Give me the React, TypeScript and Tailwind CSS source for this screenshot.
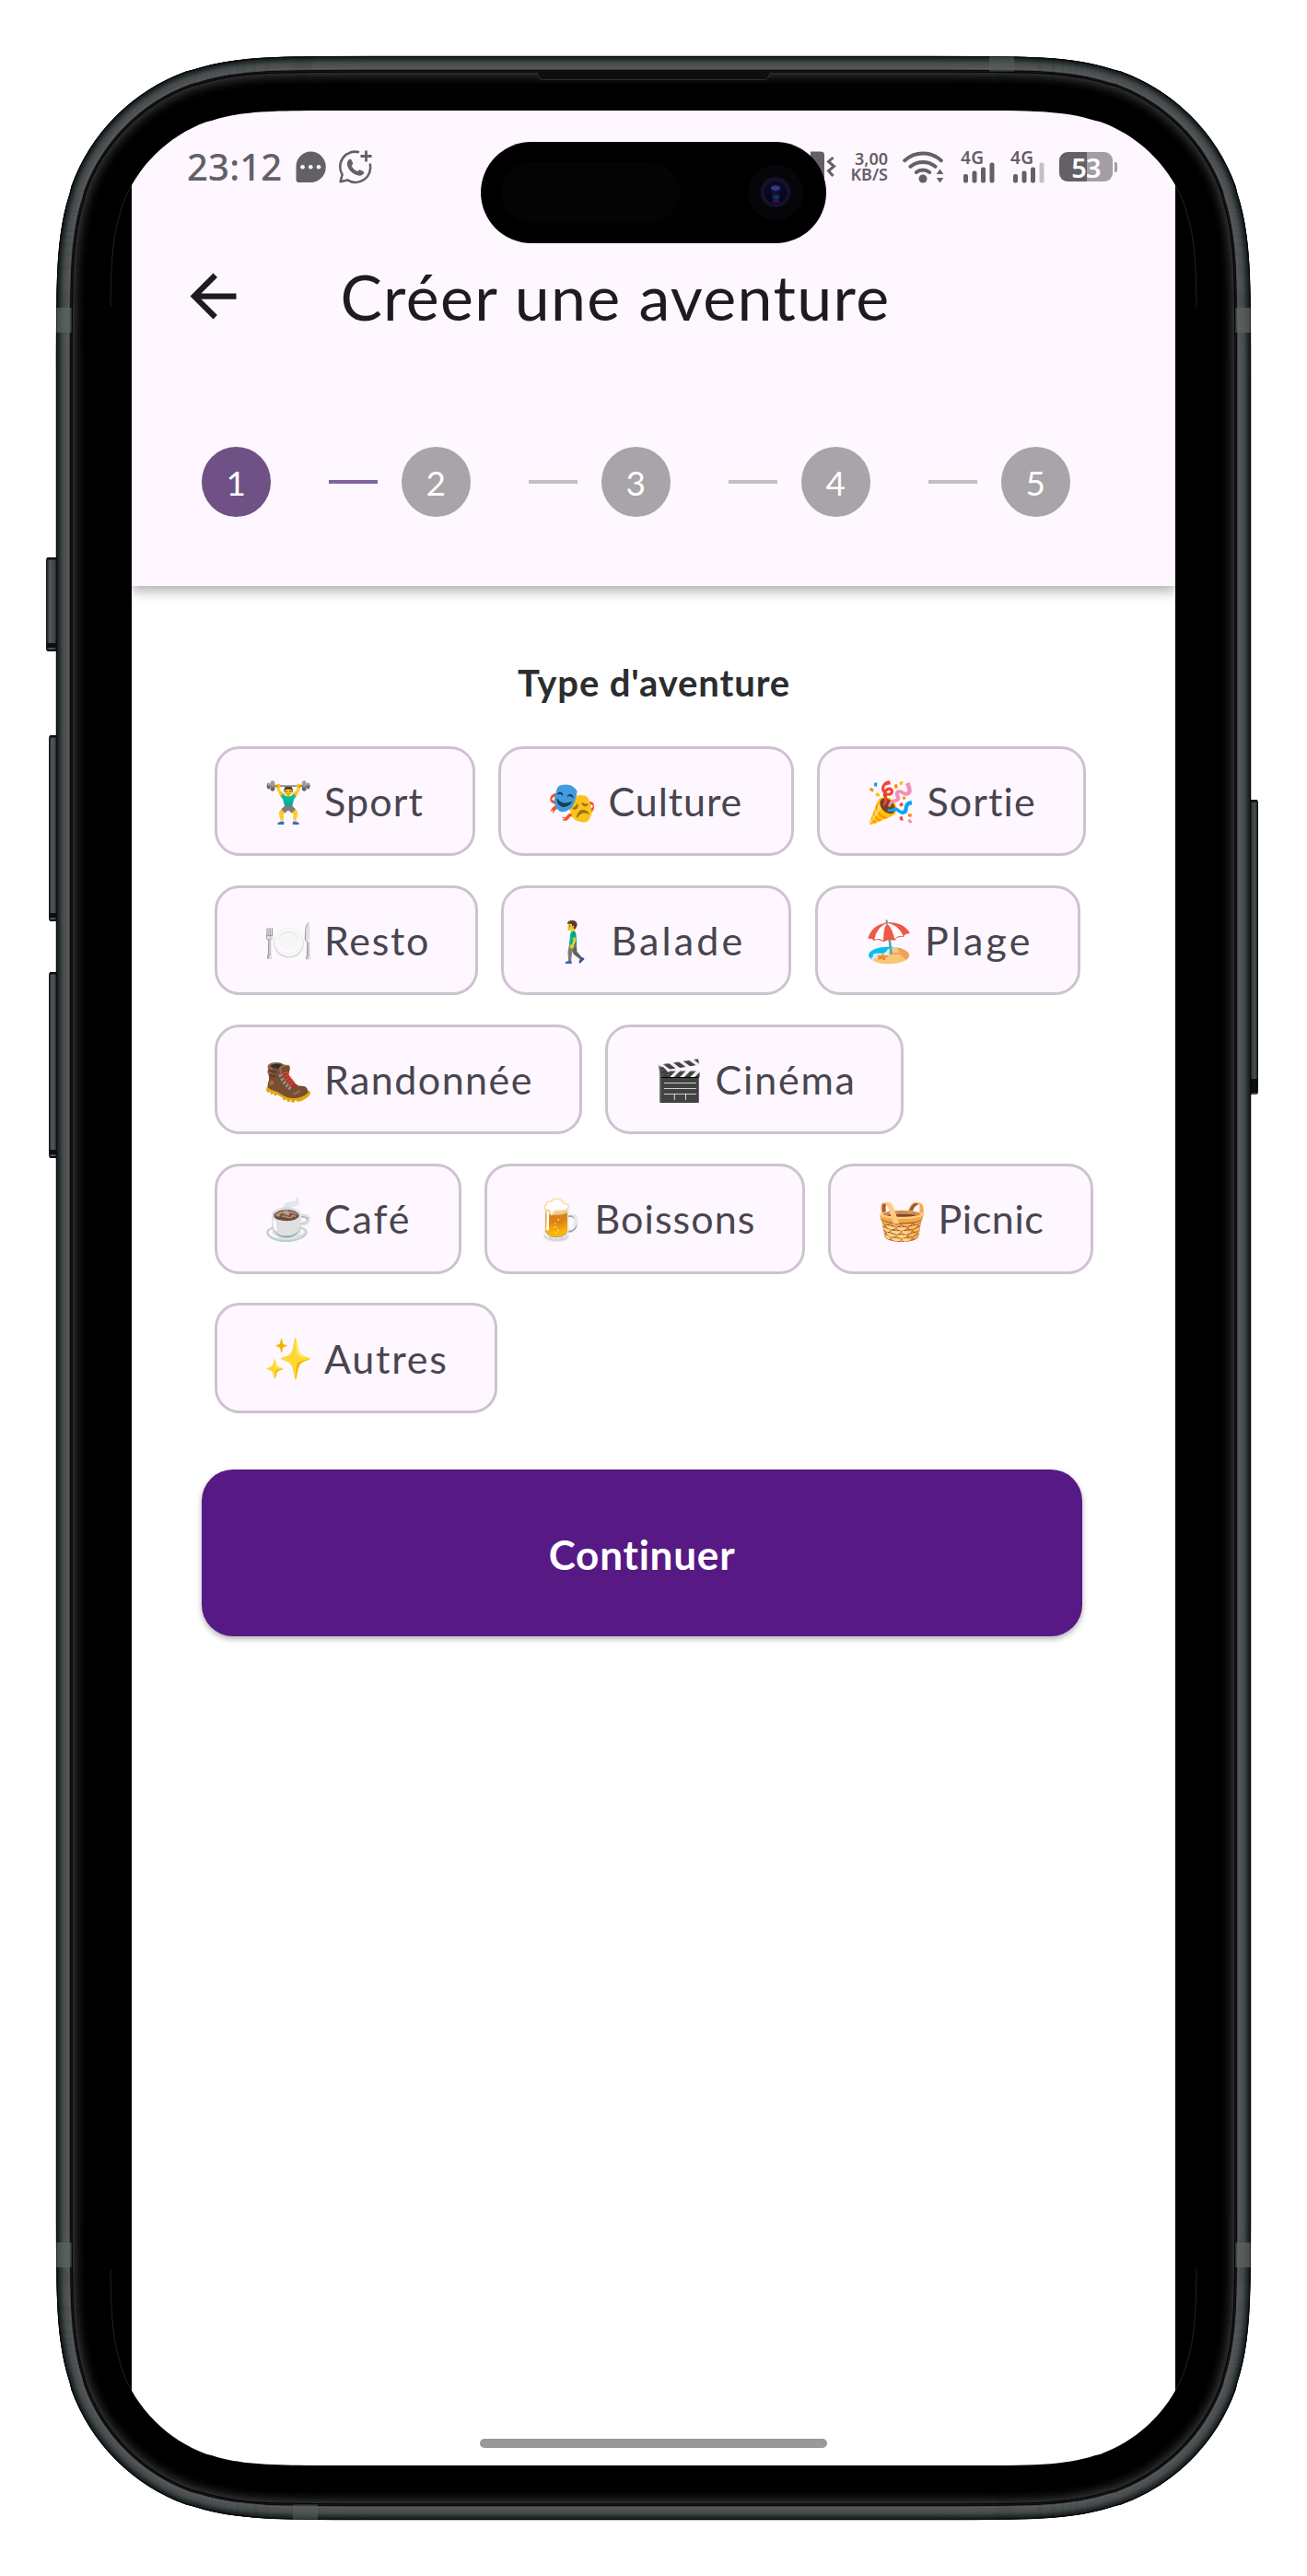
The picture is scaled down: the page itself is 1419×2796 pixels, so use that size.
type Chip = { emoji: string; label: string; box: string };

const CHIP_ROWS: Chip[][] = [
  [
    { emoji: '🏋️‍♂️', label: 'Sport', box: 'w-[283px] tracking-[1.1px]' },
    { emoji: '🎭', label: 'Culture', box: 'w-[320.5px] tracking-[0.9px]' },
    { emoji: '🎉', label: 'Sortie', box: 'w-[291.5px] tracking-[1.1px]' },
  ],
  [
    { emoji: '🍽️', label: 'Resto', box: 'w-[286px] tracking-[1.7px]' },
    { emoji: '🚶‍♂️', label: 'Balade', box: 'w-[315px] tracking-[3.1px]' },
    { emoji: '🏖️', label: 'Plage', box: 'w-[288px] tracking-[3.1px]' },
  ],
  [
    { emoji: '🥾', label: 'Randonnée', box: 'w-[399px] tracking-[1.44px]' },
    { emoji: '🎬', label: 'Cinéma', box: 'w-[324px] tracking-[1.8px]' },
  ],
  [
    { emoji: '☕', label: 'Café', box: 'w-[268px] tracking-[1.9px]' },
    { emoji: '🍺', label: 'Boissons', box: 'w-[347.5px] tracking-[1.07px]' },
    { emoji: '🧺', label: 'Picnic', box: 'w-[287.5px] tracking-[0.6px]' },
  ],
  [{ emoji: '✨', label: 'Autres', box: 'w-[307.5px] tracking-[1.75px]' }],
];

/* Rounded rectangle with continuous-curvature corners. */
function smoothRect(x: number, y: number, w: number, h: number, r: number) {
  const k = [1.52866, 1.08849, 0.86841, 0.66993, 0.63149, 0.37282, 0.16906, 0.07491, 0.06549].map((v) => v * r);
  const [a, b, c, d, e, f, g, i, j] = k;
  const X = x + w;
  const Y = y + h;
  return [
    `M${x + a} ${y}H${X - a}`,
    `C${X - b} ${y} ${X - c} ${y} ${X - d} ${y + j}L${X - e} ${y + i}`,
    `C${X - f} ${y + g} ${X - g} ${y + f} ${X - i} ${y + e}L${X - j} ${y + d}`,
    `C${X} ${y + c} ${X} ${y + b} ${X} ${y + a}V${Y - a}`,
    `C${X} ${Y - b} ${X} ${Y - c} ${X - j} ${Y - d}L${X - i} ${Y - e}`,
    `C${X - g} ${Y - f} ${X - f} ${Y - g} ${X - e} ${Y - i}L${X - d} ${Y - j}`,
    `C${X - c} ${Y} ${X - b} ${Y} ${X - a} ${Y}H${x + a}`,
    `C${x + b} ${Y} ${x + c} ${Y} ${x + d} ${Y - j}L${x + e} ${Y - i}`,
    `C${x + f} ${Y - g} ${x + g} ${Y - f} ${x + i} ${Y - e}L${x + j} ${Y - d}`,
    `C${x} ${Y - c} ${x} ${Y - b} ${x} ${Y - a}V${y + a}`,
    `C${x} ${y + b} ${x} ${y + c} ${x + j} ${y + d}L${x + i} ${y + e}`,
    `C${x + g} ${y + f} ${x + f} ${y + g} ${x + e} ${y + i}L${x + d} ${y + j}`,
    `C${x + c} ${y} ${x + b} ${y} ${x + a} ${y}Z`,
  ].join('');
}

const ring = (inset: number) => smoothRect(61 + inset, 61 + inset, 1297 - 2 * inset, 2674 - 2 * inset, 223 - inset);
const SCREEN = smoothRect(120, 120, 1179, 2556, 165);

/* Colours of the metal edge and bezel glow, one per pixel from outside in. */
const EDGE = [
  '#08090a', '#181d1e', '#1f2526', '#262c2e', '#2d3335', '#353b3d', '#3d4345', '#44494b', '#494d4f', '#4c5052',
  '#4e5254', '#505455', '#515556', '#5a5d5e', '#4c4e4f', '#0b0b0b', '#161616', '#050505', '#2c2c2c', '#272727',
  '#222222', '#1d1d1d', '#191919', '#151515', '#111111', '#0e0e0e', '#0b0b0b', '#080808', '#060606', '#040404',
];

const LEFT_BUTTONS = [
  { x: 50, y: 605, w: 12, h: 102 },
  { x: 53, y: 798, w: 9, h: 202 },
  { x: 53, y: 1055, w: 9, h: 202 },
];

function DeviceFrame() {
  return (
    <svg className="pointer-events-none absolute inset-0" width="1419" height="2796" viewBox="0 0 1419 2796" fill="none">
      <defs>
        <linearGradient id="keyL" x1="0" x2="1" y1="0" y2="0">
          <stop offset="0" stopColor="#0e1011" />
          <stop offset=".25" stopColor="#55595a" />
          <stop offset=".6" stopColor="#3b3f40" />
          <stop offset="1" stopColor="#15181a" />
        </linearGradient>
        <linearGradient id="keyR" x1="1" x2="0" y1="0" y2="0">
          <stop offset="0" stopColor="#0e1011" />
          <stop offset=".3" stopColor="#4b4f50" />
          <stop offset="1" stopColor="#15181a" />
        </linearGradient>
        <radialGradient id="lens" cx=".5" cy=".35" r=".6">
          <stop offset="0" stopColor="#1c1f56" />
          <stop offset=".45" stopColor="#080928" />
          <stop offset="1" stopColor="#04041a" />
        </radialGradient>
        <clipPath id="strips">
          <path d="M100 202h43v131h-43zM1276 202h43v131h-43zM100 2463h43v131h-43zM1276 2463h43v131h-43z" />
        </clipPath>
      </defs>

      {LEFT_BUTTONS.map((k) => (
        <g key={k.y}>
          <rect x={k.x} y={k.y} width={k.w + 4} height={k.h} rx="3" fill="url(#keyL)" />
          <rect x={k.x + 1} y={k.y} width={k.w} height="2.5" rx="1" fill="#0c0e0f" />
          <rect x={k.x + 1} y={k.y + k.h - 9} width={k.w} height="5" fill="#0c0e0f" />
          <rect x={k.x + 1} y={k.y + k.h - 2} width={k.w} height="2" rx="1" fill="#0c0e0f" />
        </g>
      ))}
      <rect x="1354" y="868" width="12" height="320" rx="3" fill="url(#keyR)" />
      <rect x="1357" y="868" width="8" height="2.5" fill="#0c0e0f" />
      <rect x="1357" y="1171" width="8" height="15" fill="#0c0e0f" />

      <path d={ring(0) + SCREEN} fill="#000" fillRule="evenodd" />
      {EDGE.map((color, i) => (
        <path key={i} d={ring(i + 0.5)} stroke={color} strokeWidth="1.5" />
      ))}
      <path d={ring(0.5)} stroke="#0a0b0c" />

      <g fill="#5c6263" opacity=".7">
        <path d="M61.500 334h16v27h-16zM1341.500 334h16v27h-16zM61.500 2434h16v27h-16zM1341.500 2434h16v27h-16z" />
        <path d="M1074 61.500h27v16h-27zM318 2718.500h27v16h-27z" opacity=".75" />
      </g>
      <path d="M582 78.500c3 1 2 8 7.500 8h240.500c5.500 0 4-7 7.500-8z" fill="#0e0e0e" />
      <path d="M582 78.500c3 1 2 8 7.500 8h240.500c5.500 0 4-7 7.500-8" stroke="#303030" strokeWidth="1" />

      <path d="M119 180h24v2440h-24zM1276 180h24v2440h-24z" fill="#000" />
      <path d={SCREEN} stroke="#3a3a3a" strokeWidth=".6" clipPath="url(#strips)" />

      <rect x="522" y="154" width="375" height="110" rx="55" fill="#000" />
      <rect x="544" y="176" width="194" height="66" rx="33" fill="#040404" />
      <circle cx="842" cy="209" r="30" fill="#070509" />
      <circle cx="842" cy="208.500" r="16.500" fill="#12132a" />
      <circle cx="842" cy="209" r="12" fill="url(#lens)" />
      <ellipse cx="842" cy="204" rx="5" ry="2.500" fill="#474a8c" opacity=".7" />
      <ellipse cx="842.500" cy="214" rx="4" ry="3" fill="#12505a" opacity=".6" />
      <ellipse cx="842.500" cy="218.500" rx="4" ry="2" fill="#4b1660" opacity=".7" />
    </svg>
  );
}

function ChatBubble() {
  return (
    <svg className="h-[35px] w-[33px] shrink-0" viewBox="0 0 33 35">
      <path d="M16.500.500a16 16.500 0 0 1 0 33.500H3.500A3 3 0 0 1 .500 31V17A16 16.500 0 0 1 16.500.500z" fill="#636066" />
      <g fill="#fff">
        <circle cx="7.500" cy="17.300" r="2.300" />
        <circle cx="16.300" cy="17.300" r="2.300" />
        <circle cx="25" cy="17.300" r="2.300" />
      </g>
    </svg>
  );
}

function CallPlus() {
  return (
    <svg className="h-[38px] w-[38px] shrink-0" viewBox="0 0 38 38" fill="none" stroke="#636066" strokeWidth="2.600">
      <path d="M23 3.300A16.300 16.300 0 0 0 4.600 27.500L2.600 35.200l7.600-1.800A16.300 16.300 0 0 0 34.700 15.500" strokeLinejoin="round" />
      <path d="M30.500 1.500v12M24.500 7.500h12" strokeWidth="2.800" />
      <path
        d="M11.500 11.500c1.200-1.200 2.600-1 3.300.5l1.200 2.800c.5 1.200-.2 2-1.400 3.200 1.500 2.800 3.800 4.900 6.600 6.100 1-1.200 1.900-2.200 3.100-1.700l3 1.500c1.200.7 1.100 2 .3 2.900-2.200 2.600-5.400 2.300-9.200.5-4.300-2.100-7.300-5.900-8.300-9.600-.6-2.400 0-4.800 1.400-6.200z"
        fill="#636066"
        stroke="none"
      />
    </svg>
  );
}

function Vibrate() {
  return (
    <svg className="h-[36px] w-[28px] shrink-0" viewBox="0 0 28 36" fill="none">
      <rect x="-10" y="1.500" width="25" height="34" rx="4" fill="#636066" />
      <path d="M24.500 8l-5 4.500 6 5-6 5 5 5.500" stroke="#636066" strokeWidth="3" />
    </svg>
  );
}

function Wifi() {
  return (
    <svg className="h-[36px] w-[46px] shrink-0" viewBox="0 0 46 36" fill="none" stroke="#636066" strokeWidth="4" strokeLinecap="round">
      <path d="M3.200 11.200a29 29 0 0 1 39.600 0" />
      <path d="M9.500 17.800a21 21 0 0 1 27 0" />
      <path d="M15.800 24a11.500 11.500 0 0 1 14.400 0" />
      <circle cx="23" cy="31" r="4.500" fill="#636066" stroke="none" />
      <path d="M41.500 20.500l3.800 5.500h-7.600zM41.500 35.500l3.800-5.500h-7.600z" fill="#636066" stroke="none" />
    </svg>
  );
}

function Signal({ weak = false }: { weak?: boolean }) {
  return (
    <div className="relative h-[36px] w-[40px] shrink-0">
      <span className="absolute top-0 left-px text-[19px] leading-[16px] font-semibold tracking-[0.5px]">4G</span>
      <svg className="absolute inset-0" width="40" height="36" viewBox="0 0 40 36" fill="#636066">
        <rect x="4" y="26" width="5" height="9.500" rx="2" />
        <rect x="13.500" y="22.500" width="5" height="13" rx="2" />
        <rect x="23" y="18.500" width="5" height="17" rx="2" />
        <rect x="32.500" y="13.500" width="5" height="22" rx="2" fill={weak ? '#c4bfc6' : '#636066'} />
      </svg>
    </div>
  );
}

function Battery() {
  return (
    <div className="flex shrink-0 items-center gap-[2px]">
      <div className="flex h-[32px] w-[58px] items-center justify-center rounded-[9px] bg-[linear-gradient(90deg,#636066_52%,#a39ea4_52%)] text-[29px] leading-none font-semibold tracking-[-0.8px] text-white">
        53
      </div>
      <div className="h-[11px] w-[3px] rounded-r-[2px] bg-[#a39ea4]" />
    </div>
  );
}

function StatusBar() {
  return (
    <div className="flex h-[122px] items-center pr-[63px] pl-[60px] font-['Noto_Sans',sans-serif] text-[#636066]">
      <span className="w-[118px] shrink-0 text-[40px] leading-[50px] font-medium tracking-[0.2px]">23:12</span>
      <ChatBubble />
      <div className="w-[13px]" />
      <CallPlus />
      <div className="ml-auto flex items-center">
        <Vibrate />
        <p className="mr-[15px] ml-[14px] w-[42px] text-right text-[18px] leading-[17px] font-semibold whitespace-nowrap">
          3,00
          <br />
          KB/S
        </p>
        <Wifi />
        <div className="w-[17px]" />
        <Signal />
        <div className="w-[14px]" />
        <Signal weak />
        <div className="w-[14px]" />
        <Battery />
      </div>
    </div>
  );
}

function Stepper() {
  return (
    <div className="flex items-center pt-[85px] pl-[75.500px] text-[37px] leading-none text-white">
      {[1, 2, 3, 4, 5].map((n) => (
        <div key={n} className="flex items-center">
          {n > 1 && <div className={`mr-[25.500px] ml-[62.500px] h-[3.500px] w-[53.500px] ${n === 2 ? 'bg-[#80659a]' : 'bg-[#c1bfc3]'}`} />}
          <div className={`flex size-[75.500px] items-center justify-center rounded-full pt-[2px] ${n === 1 ? 'bg-[#6f5185]' : 'bg-[#a8a4a9]'}`}>{n}</div>
        </div>
      ))}
    </div>
  );
}

export default function App() {
  return (
    <div className="relative h-[2796px] w-[1419px] bg-white pt-[120px] pl-[143px] font-['Lato',sans-serif]">
      <main className="flex h-[2556px] w-[1133px] flex-col bg-white">
        <header className="h-[516px] shrink-0 bg-[#fef7ff] shadow-[0_6px_12px_rgba(0,0,0,0.3)]">
          <StatusBar />
          <div className="flex h-[158px] items-center pl-[51px]">
            <svg className="size-[75px] shrink-0" viewBox="0 0 24 24" fill="#1d1b20">
              <path d="M20 11H7.830l5.590-5.590L12 4l-8 8 8 8 1.410-1.410L7.830 13H20v-2z" />
            </svg>
            <h1 className="mt-[2px] ml-[100.500px] text-[68px] leading-none tracking-[1.36px] whitespace-nowrap text-[#1d1b20]">Créer une aventure</h1>
          </div>
          <Stepper />
        </header>

        <section className="flex flex-col pt-[82px] pl-[76px]">
          <h2 className="w-[982px] text-center text-[40px] leading-[46px] font-bold tracking-[0.87px] text-[#2b2d2e]">Type d'aventure</h2>
          <div className="mt-[45.500px] ml-[13.500px] flex flex-col gap-[31.700px]">
            {CHIP_ROWS.map((row) => (
              <div key={row[0].label} className="flex gap-[25.500px]">
                {row.map((c) => (
                  <button
                    key={c.label}
                    className={`flex h-[119.500px] shrink-0 items-center rounded-[27px] border-3 border-[#cdc3cf] bg-[#fef7ff] pl-[50px] text-[43px] leading-none whitespace-nowrap text-[#49454f] ${c.box}`}
                  >
                    <span className="w-[66.500px] shrink-0 text-left text-[43.500px] tracking-normal">{c.emoji}</span>
                    <span>{c.label}</span>
                  </button>
                ))}
              </div>
            ))}
          </div>
          <button className="mt-[61px] h-[181px] w-[956px] rounded-[34px] bg-[#571a85] pt-[3px] text-[44px] font-bold tracking-[0.8px] text-white shadow-[0_3px_6px_rgba(0,0,0,0.3)]">
            Continuer
          </button>
        </section>

        <div className="mt-auto mb-[19px] ml-[378px] h-[10px] w-[377px] shrink-0 rounded-full bg-[#999999]" />
      </main>
      <DeviceFrame />
    </div>
  );
}
